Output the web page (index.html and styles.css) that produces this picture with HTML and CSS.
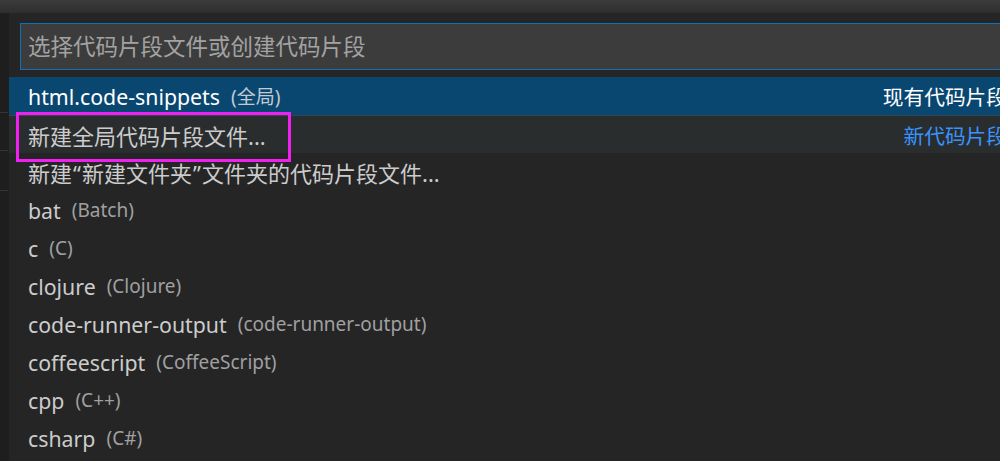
FILE: index.html
```html
<!DOCTYPE html>
<html lang="zh-CN">
<head>
<meta charset="utf-8">
<title>Quick Pick</title>
<link rel="stylesheet" href="styles.css">
</head>
<body>
<div class="titlebar"></div>
<div class="main">
  <div class="strip">
    <div class="strip-line l1"></div>
    <div class="strip-line l2"></div>
    <div class="strip-line l3"></div>
  </div>
  <div class="quickpick">
    <div class="input-wrap">
      <div class="input"><span class="placeholder">选择代码片段文件或创建代码片段</span></div>
    </div>
    <div class="list">
      <div class="row focused">
        <span class="label">html.code-snippets</span><span class="desc">(全局)</span>
        <span class="sep">现有代码片段</span>
      </div>
      <div class="row hover divided">
        <span class="label cjk">新建全局代码片段文件...</span>
        <span class="sep link">新代码片段</span>
        <div class="mark"></div>
      </div>
      <div class="row"><span class="label cjk">新建<span class="q">“</span>新建文件夹<span class="q">”</span>文件夹的代码片段文件...</span></div>
      <div class="row"><span class="label">bat</span><span class="desc">(Batch)</span></div>
      <div class="row"><span class="label">c</span><span class="desc">(C)</span></div>
      <div class="row"><span class="label">clojure</span><span class="desc">(Clojure)</span></div>
      <div class="row"><span class="label">code-runner-output</span><span class="desc">(code-runner-output)</span></div>
      <div class="row"><span class="label">coffeescript</span><span class="desc">(CoffeeScript)</span></div>
      <div class="row"><span class="label">cpp</span><span class="desc">(C++)</span></div>
      <div class="row"><span class="label">csharp</span><span class="desc">(C#)</span></div>
    </div>
  </div>
</div>
</body>
</html>
```
FILE: styles.css
```css
* { box-sizing: border-box; }
html, body {
  margin: 0;
  padding: 0;
  width: 1000px;
  height: 461px;
  overflow: hidden;
  background: #252526;
  font-family: "Noto Sans", "Noto Sans CJK SC", sans-serif;
}
.titlebar {
  height: 13px;
  background: linear-gradient(#3b3b3b, #2e2e2e);
}
.main {
  display: flex;
  width: 1040px;
  height: 448px;
}
.strip {
  width: 9px;
  flex: none;
  background: #1e1e1e;
  position: relative;
}
.strip-line {
  position: absolute;
  left: 0;
  right: 1px;
  height: 1px;
  background: #353535;
}
.l1 { top: 99px; }
.l2 { top: 137px; }
.l3 { top: 177px; }
.quickpick {
  flex: none;
  width: 1008px;
  display: flex;
  flex-direction: column;
}
.input-wrap {
  padding: 10px 0 7px 11px;
}
.input {
  height: 47px;
  border: 1px solid #0e70b8;
  background: #3c3c3c;
  display: flex;
  align-items: center;
  padding-left: 7px;
}
.placeholder {
  color: #a2a2a2;
  font-size: 22.5px;
  line-height: 1;
  padding-top: 1px;
}
.list {
  display: flex;
  flex-direction: column;
}
.row {
  height: 38px;
  display: flex;
  align-items: center;
  padding: 0 10px 0 19px;
  font-size: 21.3px;
  color: #cccccc;
  position: relative;
  white-space: nowrap;
}
.row.focused {
  background: #094771;
  color: #ffffff;
}
.row.hover {
  background: #2a2d2e;
}
.row.divided {
  border-top: 1px solid #30475a;
  height: 38px;
}
.label.cjk {
  font-size: 22px;
}
.q {
  display: inline-block;
  width: 10px;
  text-align: center;
}
.desc {
  margin-left: 11px;
  font-size: 19px;
  color: #a0a0a0;
}
.focused .desc { color: #c2cbd4; }
.sep {
  margin-left: auto;
  font-size: 20.7px;
  color: #ffffff;
}
.sep.link { color: #3794ff; }
.mark {
  position: absolute;
  left: 7px;
  top: -4px;
  width: 275px;
  height: 50px;
  border: 3px solid #f020f0;
}
```
